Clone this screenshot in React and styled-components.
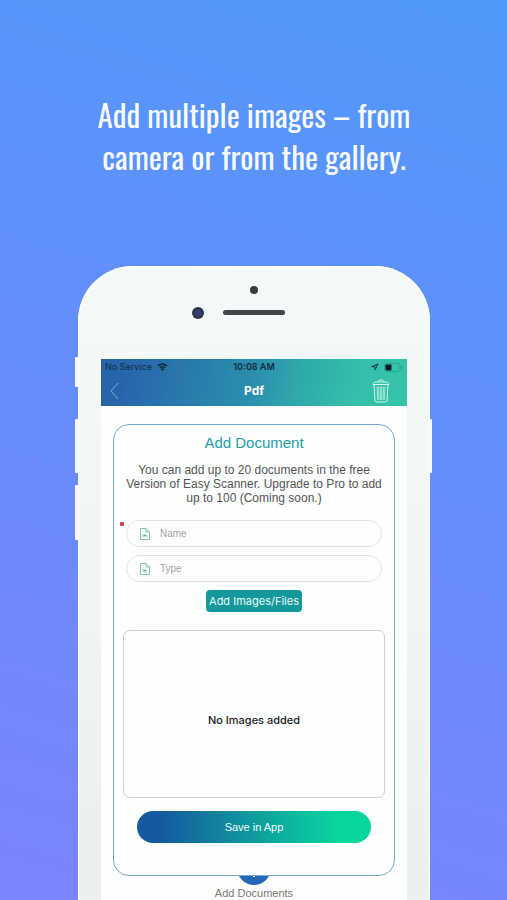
import styled, { createGlobalStyle } from "styled-components";

const GlobalStyle = createGlobalStyle`
  * {
    box-sizing: border-box;
  }
  body {
    margin: 0;
    font-family: "Liberation Sans", Arial, sans-serif;
  }
  button, input {
    font-family: inherit;
  }
`;

const Page = styled.main`
  min-height: 100vh;
  display: flex;
  flex-direction: column;
  padding: 93px 77px 0 78px;
  background: linear-gradient(197deg, #4f99f8 0%, #648efb 45%, #7c84fc 100%);
`;

const Headline = styled.h1`
  margin: 0 auto 89px;
  max-width: 340px;
  font-family: "Oswald", "Roboto Condensed", "Liberation Sans Narrow", sans-serif;
  font-size: 31px;
  font-weight: 400;
  line-height: 42px;
  text-align: center;
  color: #f6faff;
`;

const Phone = styled.section`
  position: relative;
  flex: 1;
  display: flex;
  flex-direction: column;
  padding: 0 23px;
  border-radius: 55px 55px 0 0;
  background: linear-gradient(180deg, #f4f9fa 0%, #f0f5f6 50%, #e9eeee 100%);
  box-shadow: inset 0 1px 2px 1px #fbfeff;
`;

const SideButton = styled.span`
  position: absolute;
  top: ${(p) => p.$top}px;
  ${(p) => (p.$right ? "right: -2px;" : "left: -3px;")}
  width: 4px;
  height: ${(p) => p.$height}px;
  border-radius: 1px;
  background: #f4faff;
`;

const Bezel = styled.div`
  height: 93px;
  display: flex;
  justify-content: center;
  padding-top: 19px;
`;

const Screen = styled.div`
  flex: 1;
  display: flex;
  flex-direction: column;
  background: #fdfefe;
`;

const Header = styled.header`
  background: linear-gradient(100deg, #2765ab 8%, #2b8fae 50%, #2fa9aa 64%, #35c0a9 84%, #35c4a8 100%);
`;

const StatusBar = styled.div`
  display: grid;
  grid-template-columns: 1fr auto 1fr;
  align-items: center;
  height: 16px;
  padding: 0 4px;
  font-family: "Inter", sans-serif;
  font-size: 9px;
  line-height: 16px;
  color: #102c42;
`;

const StatusSide = styled.div`
  display: flex;
  align-items: center;
  gap: 5px;
  justify-content: ${(p) => (p.$end ? "flex-end" : "flex-start")};
`;

const Clock = styled.span`
  font-weight: 600;
`;

const NavBar = styled.nav`
  display: grid;
  grid-template-columns: 1fr auto 1fr;
  align-items: center;
  height: 31px;
  padding: 0 7px;
`;

const NavTitle = styled.h2`
  margin: 0;
  font-family: "Inter", sans-serif;
  font-size: 12px;
  font-weight: 700;
  line-height: 16px;
  color: #fff;
`;

const IconButton = styled.button`
  display: flex;
  justify-self: ${(p) => (p.$end ? "end" : "start")};
  padding: ${(p) => (p.$end ? "0 10px 0 0" : "0")};
  border: 0;
  background: none;
`;

const Card = styled.form`
  position: relative;
  z-index: 1;
  display: flex;
  flex-direction: column;
  align-items: center;
  margin: 18px 12px 0;
  padding: 8px 9px 32px;
  border: 1px solid #74abd0;
  border-radius: 16px;
  background: #fdfefe;
`;

const CardTitle = styled.h3`
  margin: 0;
  font-size: 15px;
  font-weight: 400;
  line-height: 20px;
  color: #239da8;
`;

const Info = styled.p`
  margin: 10px 0 15px;
  font-size: 12px;
  line-height: 14px;
  text-align: center;
  color: #555;
`;

const Field = styled.label`
  position: relative;
  display: flex;
  align-items: center;
  gap: 9px;
  align-self: stretch;
  height: 27px;
  margin: 0 3px 8px;
  padding: 0 12px;
  border: 1px solid #e2e2e4;
  border-radius: 14px;
`;

const Required = styled.span`
  position: absolute;
  top: 1px;
  left: -7px;
  width: 4px;
  height: 4px;
  border-radius: 1px;
  background: #cf4648;
`;

const Input = styled.input`
  flex: 1;
  min-width: 0;
  padding: 0;
  border: 0;
  outline: 0;
  background: none;
  font-size: 10px;
  line-height: 16px;
  color: #444;
  &::placeholder {
    color: #a2a2a2;
    opacity: 1;
  }
`;

const AddButton = styled.button`
  height: 22px;
  padding: 0 3px;
  border: 0;
  border-radius: 4px;
  background: #13989b;
  font-family: "Inter", sans-serif;
  font-size: 11px;
  line-height: 22px;
  color: #e8fbfb;
`;

const ImageList = styled.div`
  display: flex;
  align-items: center;
  justify-content: center;
  align-self: stretch;
  height: 168px;
  margin: 18px 0 13px;
  padding-top: 12px;
  border: 1px solid #cfcfd2;
  border-radius: 7px;
  font-family: "Inter", sans-serif;
  font-size: 11px;
  font-weight: 500;
  color: #222;
`;

const SaveButton = styled.button`
  align-self: stretch;
  height: 32px;
  margin: 0 14px;
  border: 0;
  border-radius: 16px;
  background: linear-gradient(90deg, #155a9f 10%, #08d59c 85%);
  font-size: 11px;
  color: #f2fcff;
`;

const Footer = styled.footer`
  display: flex;
  flex-direction: column;
  align-items: center;
  gap: 1px;
  margin-top: -25px;
`;

const PlusButton = styled.button`
  display: flex;
  align-items: center;
  justify-content: center;
  width: 34px;
  height: 34px;
  padding: 0;
  border: 0;
  border-radius: 50%;
  background: #2467b6;
`;

const FooterLabel = styled.label`
  font-size: 11px;
  line-height: 14px;
  color: #777;
`;

const Sensors = styled.div`
  svg {
    display: block;
    overflow: visible;
  }
`;

function WifiIcon() {
  return (
    <svg width="11" height="8" viewBox="0 0 20 15" fill="none" stroke="currentColor">
      <path d="M1.5 5.5a12.5 12.5 0 0 1 17 0" strokeWidth="3" />
      <path d="M5 9.2a7.6 7.6 0 0 1 10 0" strokeWidth="3" />
      <path d="M10 15l-3.2-3.6a5 5 0 0 1 6.4 0z" fill="currentColor" stroke="none" />
    </svg>
  );
}

function LocationIcon() {
  return (
    <svg width="8" height="8" viewBox="0 0 16 16" fill="none">
      <path d="M14 2L1.5 7.5H8V14z" stroke="currentColor" strokeWidth="1.8" strokeLinejoin="round" />
    </svg>
  );
}

function BatteryIcon() {
  return (
    <svg width="19" height="9" viewBox="0 0 19 9" fill="none">
      <rect x="0.5" y="0.5" width="15.5" height="8" rx="2" stroke="#2a9a8c" strokeWidth="0.8" />
      <rect x="1.5" y="1.5" width="6" height="6" rx="1" fill="#0b1d26" />
      <path d="M17.3 3v3c1-.4 1-2.6 0-3z" fill="#257d80" />
    </svg>
  );
}

function BackIcon() {
  return (
    <svg width="12" height="20" viewBox="0 0 12 20" fill="none">
      <path d="M10 2L3 10l7 8" stroke="#77afd0" strokeWidth="1" />
    </svg>
  );
}

function TrashIcon() {
  return (
    <svg width="18" height="24" viewBox="0 0 18 24" fill="none" stroke="#d3f7ef" strokeWidth="1">
      <path d="M1 5.5C1 3.8 2.4 3 4.5 3h9C15.6 3 17 3.8 17 5.5z" />
      <path d="M6 3c0-1.3.9-2 3-2s3 .7 3 2" />
      <path d="M2 5.5l1 16c.1 1 .6 1.5 1.5 1.5h9c.9 0 1.4-.5 1.5-1.5l1-16" />
      <path d="M5 8l.7 12.5h1.2L6.5 8zM8.3 8v12.5h1.4V8zM11.5 8l-.4 12.5h1.2L13 8z" strokeWidth="0.7" />
    </svg>
  );
}

function FileIcon() {
  return (
    <svg width="12" height="12" viewBox="0 0 12 12" fill="none" stroke="#83c5b9" strokeWidth="1">
      <path d="M1.5.5H7l3.5 3.5v7.5h-9z" />
      <path d="M7 .5V4h3.5" />
      <path d="M3.5 5.5v4h5V6.2z" fill="#c3e4dd" stroke="none" />
      <path d="M4.5 7.5H7" stroke="#5faea4" />
    </svg>
  );
}

function PlusIcon() {
  return (
    <svg width="18" height="18" viewBox="0 0 18 18" stroke="#fff" strokeWidth="2">
      <path d="M9 0v18M0 9h18" />
    </svg>
  );
}

function PhoneTop() {
  return (
    <svg width="112" height="38" viewBox="0 0 112 38">
      <circle cx="56" cy="5" r="4" fill="#3b3d42" />
      <circle cx="0" cy="28" r="6" fill="#30333f" />
      <circle cx="0" cy="28" r="3.8" fill="#304078" />
      <rect x="25" y="25" width="62" height="5" rx="2.5" fill="#434548" />
    </svg>
  );
}

export default function App() {
  return (
    <>
      <GlobalStyle />
      <Page>
        <Headline>Add multiple images – from camera or from the gallery.</Headline>
        <Phone>
          <SideButton $top={91} $height={30} />
          <SideButton $top={153} $height={54} />
          <SideButton $top={219} $height={55} />
          <SideButton $right $top={153} $height={54} />
          <Bezel>
            <Sensors>
              <PhoneTop />
            </Sensors>
          </Bezel>
          <Screen>
            <Header>
              <StatusBar>
                <StatusSide>
                  <span>No Service</span>
                  <WifiIcon />
                </StatusSide>
                <Clock>10:08 AM</Clock>
                <StatusSide $end>
                  <LocationIcon />
                  <BatteryIcon />
                </StatusSide>
              </StatusBar>
              <NavBar>
                <IconButton type="button" aria-label="Back">
                  <BackIcon />
                </IconButton>
                <NavTitle>Pdf</NavTitle>
                <IconButton type="button" aria-label="Delete" $end>
                  <TrashIcon />
                </IconButton>
              </NavBar>
            </Header>
            <Card onSubmit={(e) => e.preventDefault()}>
              <CardTitle>Add Document</CardTitle>
              <Info>
                You can add up to 20 documents in the free Version of Easy
                Scanner. Upgrade to Pro to add up to 100 (Coming soon.)
              </Info>
              <Field>
                <Required />
                <FileIcon />
                <Input placeholder="Name" aria-label="Name" required />
              </Field>
              <Field>
                <FileIcon />
                <Input placeholder="Type" aria-label="Type" />
              </Field>
              <AddButton type="button">Add Images/Files</AddButton>
              <ImageList>No Images added</ImageList>
              <SaveButton type="submit">Save in App</SaveButton>
            </Card>
            <Footer>
              <PlusButton id="add-documents" type="button">
                <PlusIcon />
              </PlusButton>
              <FooterLabel htmlFor="add-documents">Add Documents</FooterLabel>
            </Footer>
          </Screen>
        </Phone>
      </Page>
    </>
  );
}
